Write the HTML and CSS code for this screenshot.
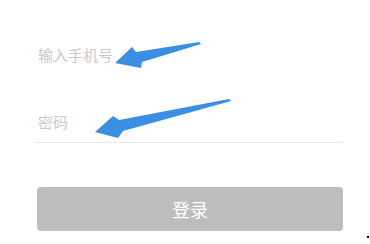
FILE: index.html
```html
<!DOCTYPE html>
<html lang="zh">
<head>
<meta charset="utf-8">
<link rel="stylesheet" href="styles.css">
</head>
<body>
<div class="page">
  <div class="field phone">输入手机号</div>
  <div class="field pwd">密码</div>
  <div class="btn">登录</div>
</div>
<svg class="arrows" width="370" height="244" viewBox="0 0 370 244">
  <polygon points="115,63 132,47 136,52 199,42 201,44 142,62 141,68" fill="#3a8ee4"/>
  <polygon points="95,132 113,116 119,120 229,99 231,101 123,131 118,138" fill="#3a8ee4"/>
</svg>
<div class="dot"></div>
</body>
</html>
```
FILE: styles.css
```css
html, body {
  margin: 0;
  padding: 0;
  background: #fff;
  width: 370px;
  height: 244px;
  overflow: hidden;
  position: relative;
  font-family: "Noto Sans CJK SC", "Noto Sans", sans-serif;
}
.page {
  display: flex;
  flex-direction: column;
  padding: 45px 0 0 37px;
  width: 306px;
}
.field {
  font-size: 15px;
  line-height: 20px;
  color: #cacaca;
  padding-left: 1px;
}
.pwd {
  margin-top: 47px;
  padding-bottom: 10px;
  border-bottom: 1px solid #e8e8e8;
}
.btn {
  margin-top: 44px;
  height: 44px;
  background: #bdbdbd;
  border-radius: 4px;
  color: #fff;
  font-size: 18px;
  display: flex;
  align-items: center;
  justify-content: center;
}
.arrows {
  position: absolute;
  left: 0;
  top: 0;
  pointer-events: none;
}
.dot {
  position: absolute;
  left: 367px;
  top: 236px;
  width: 2px;
  height: 2px;
  background: #000;
}
```
